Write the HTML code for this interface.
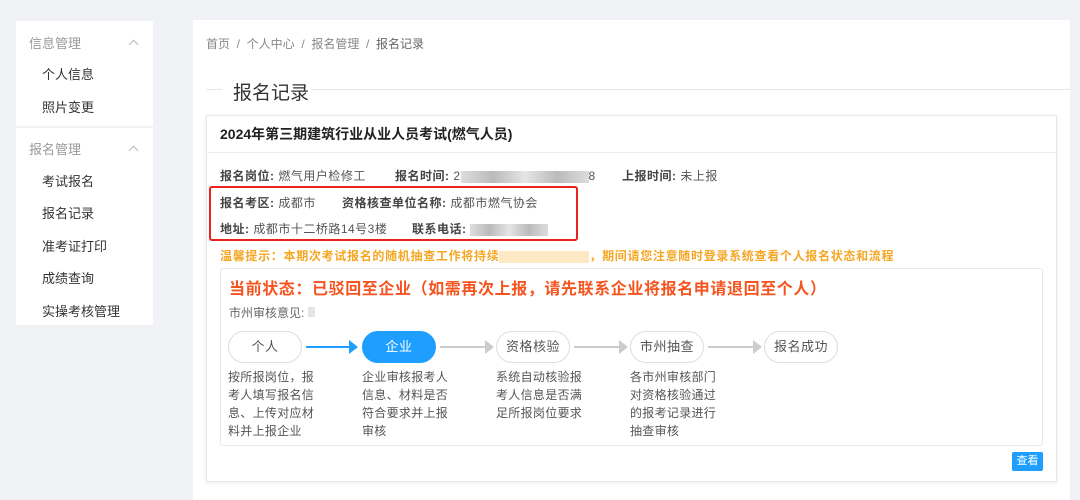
<!DOCTYPE html>
<html><head><meta charset="utf-8"><style>
*{margin:0;padding:0;box-sizing:border-box}
body{width:1080px;height:494px;background:#f0f2f5;font-family:"Liberation Sans","Noto Sans CJK SC",sans-serif;position:relative;overflow:hidden;color:#333}
.a{position:absolute;white-space:nowrap}
.side{left:16px;top:21px;width:137px;height:304px;background:#fff}
.g{color:#999;font-size:13px}
.it{font-size:13px;color:#333}
.car{width:7px;height:7px;border-left:1px solid #bbb;border-top:1px solid #bbb;transform:rotate(45deg)}
.main{left:193px;top:20px;width:877px;height:480px;background:#fff}
.card{left:206px;top:115px;width:851px;height:367px;border:1px solid #e8e8e8;box-shadow:0 1px 4px rgba(0,0,0,.08);background:#fff}
.f{font-size:12px;color:#555;letter-spacing:.5px}
.f b{color:#444;font-weight:bold}
.blur{display:inline-block;height:12px;background:linear-gradient(90deg,#ddd,#bbb,#e5e5e5,#bbb,#ddd);vertical-align:middle}
.pill{height:32px;border:1px solid #ddd;border-radius:16px;font-size:13px;color:#555;text-align:center;line-height:30px;background:#fff;letter-spacing:.5px}
.d{font-size:12px;color:#555;line-height:18px;letter-spacing:.3px}
.arr{height:2px;background:#ccc}
.arr:after{content:"";position:absolute;right:-8px;top:-6px;border-left:9px solid #ccc;border-top:7px solid transparent;border-bottom:7px solid transparent}
</style></head><body>
<div class="a side"></div>
<div class="a" style="left:16px;top:126px;width:137px;height:2px;background:#f2f2f2"></div>
<div class="a g" style="left:29px;top:33px">信息管理</div>
<div class="a car" style="left:130px;top:41px"></div>
<div class="a it" style="left:42px;top:64px">个人信息</div>
<div class="a it" style="left:42px;top:97px">照片变更</div>
<div class="a g" style="left:29px;top:139px">报名管理</div>
<div class="a car" style="left:130px;top:147px"></div>
<div class="a it" style="left:42px;top:171px">考试报名</div>
<div class="a it" style="left:42px;top:203px">报名记录</div>
<div class="a it" style="left:42px;top:236px">准考证打印</div>
<div class="a it" style="left:42px;top:268px">成绩查询</div>
<div class="a it" style="left:42px;top:301px">实操考核管理</div>

<div class="a main"></div>
<div class="a" style="left:206px;top:35px;font-size:12px;color:#888">首页 &nbsp;/&nbsp; 个人中心 &nbsp;/&nbsp; 报名管理 &nbsp;/&nbsp; <span style="color:#666">报名记录</span></div>
<div class="a" style="left:206px;top:89px;width:16px;height:1px;background:#e5e5e5"></div>
<div class="a" style="left:233px;top:78px;font-size:19px;color:#333">报名记录</div>
<div class="a" style="left:312px;top:89px;width:758px;height:1px;background:#e5e5e5"></div>

<div class="a card"></div>
<div class="a" style="left:207px;top:152px;width:849px;height:1px;background:#eee"></div>
<div class="a" style="left:220px;top:124px;font-size:14px;font-weight:bold;color:#222">2024年第三期建筑行业从业人员考试(燃气人员)</div>
<div class="a f" style="left:220px;top:167px"><b>报名岗位:</b> 燃气用户检修工</div>
<div class="a f" style="left:395px;top:167px"><b>报名时间:</b> 2<span class="blur" style="width:128px"></span>8</div>
<div class="a f" style="left:622px;top:167px"><b>上报时间:</b> 未上报</div>
<div class="a f" style="left:220px;top:194px"><b>报名考区:</b> 成都市</div>
<div class="a f" style="left:342px;top:194px"><b>资格核查单位名称:</b> 成都市燃气协会</div>
<div class="a f" style="left:220px;top:220px"><b>地址:</b> 成都市十二桥路14号3楼</div>
<div class="a f" style="left:412px;top:220px"><b>联系电话:</b> <span class="blur" style="width:78px"></span></div>
<div class="a" style="left:209px;top:186px;width:369px;height:55px;border:2px solid #e8221c;border-radius:3px"></div>
<div class="a" style="left:220px;top:247px;font-size:12px;color:#f5a623;font-weight:bold;letter-spacing:.7px">温馨提示：本期次考试报名的随机抽查工作将持续<span style="display:inline-block;width:90px;height:12px;background:#fde9c4;vertical-align:middle"></span>，期间请您注意随时登录系统查看个人报名状态和流程</div>
<div class="a" style="left:220px;top:268px;width:823px;height:178px;border:1px solid #e8e8e8;border-radius:3px"></div>
<div class="a" style="left:229px;top:275px;font-size:16px;font-weight:bold;color:#f5541f;letter-spacing:.6px">当前状态：已驳回至企业（如需再次上报，请先联系企业将报名申请退回至个人）</div>
<div class="a" style="left:229px;top:304px;font-size:12px;color:#666">市州审核意见: <span style="display:inline-block;width:7px;height:10px;background:#e5e5e5"></span></div>

<div class="a pill" style="left:228px;top:331px;width:74px">个人</div>
<div class="a" style="left:306px;top:346px;width:44px;height:2px;background:#1e9fff"></div>
<div class="a" style="left:349px;top:340px;border-left:9px solid #1e9fff;border-top:7px solid transparent;border-bottom:7px solid transparent"></div>
<div class="a pill" style="left:362px;top:331px;width:74px;background:#1e9fff;border-color:#1e9fff;color:#fff">企业</div>
<div class="a arr" style="left:440px;top:346px;width:46px"></div>
<div class="a pill" style="left:496px;top:331px;width:74px">资格核验</div>
<div class="a arr" style="left:574px;top:346px;width:46px"></div>
<div class="a pill" style="left:630px;top:331px;width:74px">市州抽查</div>
<div class="a arr" style="left:708px;top:346px;width:46px"></div>
<div class="a pill" style="left:764px;top:331px;width:74px">报名成功</div>

<div class="a d" style="left:228px;top:368px">按所报岗位，报<br>考人填写报名信<br>息、上传对应材<br>料并上报企业</div>
<div class="a d" style="left:362px;top:368px">企业审核报考人<br>信息、材料是否<br>符合要求并上报<br>审核</div>
<div class="a d" style="left:496px;top:368px">系统自动核验报<br>考人信息是否满<br>足所报岗位要求</div>
<div class="a d" style="left:630px;top:368px">各市州审核部门<br>对资格核验通过<br>的报考记录进行<br>抽查审核</div>

<div class="a" style="left:1012px;top:452px;width:31px;height:19px;background:#1e9fff;border-radius:2px;color:#fff;font-size:11px;text-align:center;line-height:19px">查看</div>
</body></html>
